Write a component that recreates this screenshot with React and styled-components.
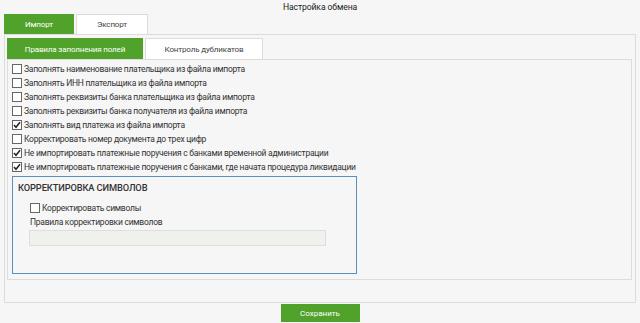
import styled, { createGlobalStyle } from 'styled-components'

const GlobalStyle = createGlobalStyle`
  html, body {
    margin: 0;
    padding: 0;
    background: #f6f6f6;
  }
  body {
    font-family: Roboto, "Liberation Sans", Arial, sans-serif;
    font-size: 10px;
    color: #333;
  }
`

const Page = styled.div`
  width: 640px;
  height: 323px;
  box-sizing: border-box;
  padding: 0 4px;
`

const Title = styled.div`
  height: 14px;
  line-height: 14px;
  text-align: center;
  font-size: 8.6px;
  letter-spacing: -0.1px;
  color: #222;
`

const TabRow = styled.div`
  display: flex;
  gap: 2px;
`

const Tab = styled.div`
  box-sizing: border-box;
  width: ${p => p.$width}px;
  height: ${p => p.$height}px;
  display: flex;
  align-items: center;
  justify-content: center;
  font-size: 8px;
  letter-spacing: -0.15px;
  background: ${p => (p.$active ? '#50a22a' : '#ffffff')};
  color: ${p => (p.$active ? '#ffffff' : '#444')};
  border: 1px solid ${p => (p.$active ? '#50a22a' : '#dcdcdc')};
  border-bottom: none;
`

const OuterPanel = styled.div`
  box-sizing: border-box;
  height: 269px;
  border: 1px solid #dcdcdc;
  padding: 3px 3px 0 2px;
`

const InnerPanel = styled.div`
  box-sizing: border-box;
  height: 221px;
  border: 1px solid #dcdcdc;
  padding: 2px 3px 0 4px;
`

const Row = styled.label`
  display: flex;
  align-items: center;
  gap: 2px;
  height: 14px;
  font-size: 8.5px;
  letter-spacing: -0.25px;
  color: #333;
  white-space: nowrap;
`

const Box = styled.span`
  box-sizing: border-box;
  width: 10px;
  height: 10px;
  border: 1px solid #666;
  background: #fff;
  display: flex;
  align-items: center;
  justify-content: center;
  flex-shrink: 0;
`

const Fieldset = styled.div`
  box-sizing: border-box;
  width: 345px;
  height: 98px;
  margin: 2px 0 0 0;
  border: 1px solid #5b8fbe;
  padding: 4px 0 0 5px;
`

const Legend = styled.div`
  height: 14px;
  line-height: 14px;
  font-size: 9.3px;
  font-weight: 500;
  letter-spacing: -0.12px;
  color: #333;
  margin-bottom: 6px;
`

const FieldBody = styled.div`
  padding-left: 12px;
`

const FieldLabel = styled.div`
  height: 12px;
  line-height: 12px;
  font-size: 8.5px;
  letter-spacing: -0.25px;
  color: #333;
  margin-top: 1px;
`

const TextInput = styled.div`
  box-sizing: border-box;
  width: 297px;
  height: 16px;
  margin: 2px 0 0 -1px;
  background: #eef1ec;
  border: 1px solid #dedede;
`

const Footer = styled.div`
  display: flex;
  justify-content: center;
  padding-top: 1px;
`

const SaveButton = styled.button`
  box-sizing: border-box;
  width: 79px;
  height: 18px;
  background: #50a22a;
  border: none;
  color: #fff;
  font-family: Roboto, "Liberation Sans", Arial, sans-serif;
  font-size: 8px;
  padding: 0;
  cursor: pointer;
`

function Check({ checked }) {
  return (
    <Box>
      {checked && (
        <svg width="8" height="8" viewBox="0 0 8 8">
          <path d="M1 4 L3 6.3 L7 1.2" fill="none" stroke="#222" strokeWidth="1.5" />
        </svg>
      )}
    </Box>
  )
}

const options = [
  { label: 'Заполнять наименование плательщика из файла импорта', checked: false },
  { label: 'Заполнять ИНН плательщика из файла импорта', checked: false },
  { label: 'Заполнять реквизиты банка плательщика из файла импорта', checked: false },
  { label: 'Заполнять реквизиты банка получателя из файла импорта', checked: false },
  { label: 'Заполнять вид платежа из файла импорта', checked: true },
  { label: 'Корректировать номер документа до трех цифр', checked: false },
  { label: 'Не импортировать платежные поручения с банками временной администрации', checked: true },
  { label: 'Не импортировать платежные поручения с банками, где начата процедура ликвидации', checked: true },
]

export default function App() {
  return (
    <Page>
      <GlobalStyle />
      <Title>Настройка обмена</Title>
      <TabRow>
        <Tab $active $width={70} $height={20}>Импорт</Tab>
        <Tab $width={72} $height={20}>Экспорт</Tab>
      </TabRow>
      <OuterPanel>
        <TabRow>
          <Tab $active $width={136} $height={21}>Правила заполнения полей</Tab>
          <Tab $width={118} $height={21}>Контроль дубликатов</Tab>
        </TabRow>
        <InnerPanel>
          {options.map(o => (
            <Row key={o.label}>
              <Check checked={o.checked} />
              {o.label}
            </Row>
          ))}
          <Fieldset>
            <Legend>КОРРЕКТИРОВКА СИМВОЛОВ</Legend>
            <FieldBody>
              <Row>
                <Check />
                Корректировать символы
              </Row>
              <FieldLabel>Правила корректировки символов</FieldLabel>
              <TextInput />
            </FieldBody>
          </Fieldset>
        </InnerPanel>
      </OuterPanel>
      <Footer>
        <SaveButton>Сохранить</SaveButton>
      </Footer>
    </Page>
  )
}
